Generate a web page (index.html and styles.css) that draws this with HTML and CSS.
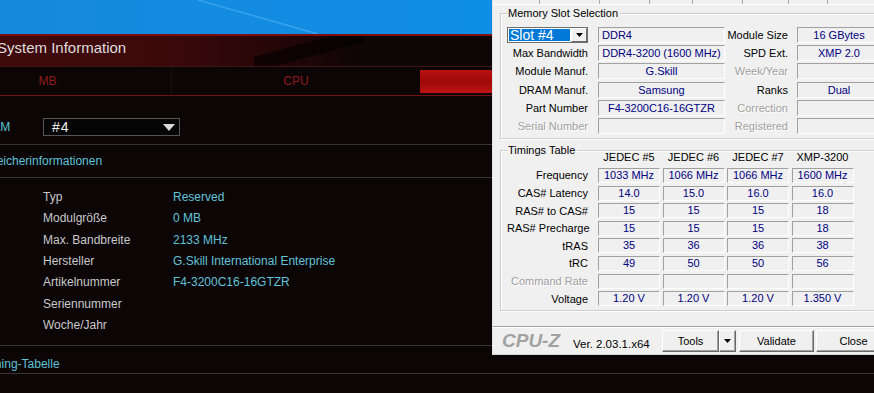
FILE: index.html
```html
<!DOCTYPE html>
<html lang="de">
<head>
  <meta charset="UTF-8">
  <meta name="viewport" content="width=device-width, initial-scale=1.0">
  <title>System Information / CPU-Z</title>
  <link rel="stylesheet" href="styles.css">
</head>
<body>
  <div class="desktop">
    <svg class="wallpaper" width="874" height="40" viewBox="0 0 874 40">
      <line x1="198" y1="0" x2="318" y2="34" stroke="#3aa2ec" stroke-width="1.5"/>
    </svg>

    <!-- window behind: System Information -->
    <div class="app">
      <div class="app-title">System Information</div>
      <div class="app-tabs">
        <div class="app-tab">MB</div>
        <div class="app-tab">CPU</div>
        <div class="app-tab active"></div>
      </div>
      <div class="dram-row">
        <span class="dram-label">DRAM</span>
        <div class="dark-select">#4<span class="tri"></span></div>
      </div>
      <div class="section-head">Speicherinformationen</div>
      <div class="info">
        <div class="info-row"><span class="key">Typ</span><span class="val">Reserved</span></div>
        <div class="info-row"><span class="key">Modulgröße</span><span class="val">0 MB</span></div>
        <div class="info-row"><span class="key">Max. Bandbreite</span><span class="val">2133 MHz</span></div>
        <div class="info-row"><span class="key">Hersteller</span><span class="val">G.Skill International Enterprise</span></div>
        <div class="info-row"><span class="key">Artikelnummer</span><span class="val">F4-3200C16-16GTZR</span></div>
        <div class="info-row"><span class="key">Seriennummer</span><span class="val"></span></div>
        <div class="info-row"><span class="key">Woche/Jahr</span><span class="val"></span></div>
      </div>
      <div class="section-head timing">Timing-Tabelle</div>
    </div>

    <!-- window in front: CPU-Z, SPD tab -->
    <div class="cpuz">
      <div class="cpuz-tabs">
        <span class="ztab t1"></span><span class="ztab t2"></span><span class="ztab t3"></span><span class="ztab t4"></span>
        <span class="ztab t5"></span><span class="ztab t6"></span><span class="ztab t7"></span>
      </div>
      <div class="cpuz-page">
        <div class="group">
          <div class="group-title">Memory Slot Selection</div>
          <div class="slot-grid">
            <div class="slot-select">
              <span class="slot-value">Slot #4</span>
              <span class="slot-btn"><svg width="7" height="4" viewBox="0 0 7 4"><path d="M0 0h7L3.5 4z" fill="#000"/></svg></span>
            </div>
            <div class="box left">DDR4</div>
            <div class="lbl r">Module Size</div>
            <div class="box">16 GBytes</div>

            <div class="lbl">Max Bandwidth</div>
            <div class="box">DDR4-3200 (1600 MHz)</div>
            <div class="lbl r">SPD Ext.</div>
            <div class="box">XMP 2.0</div>

            <div class="lbl">Module Manuf.</div>
            <div class="box">G.Skill</div>
            <div class="lbl r off">Week/Year</div>
            <div class="box"></div>

            <div class="lbl">DRAM Manuf.</div>
            <div class="box">Samsung</div>
            <div class="lbl r">Ranks</div>
            <div class="box">Dual</div>

            <div class="lbl">Part Number</div>
            <div class="box">F4-3200C16-16GTZR</div>
            <div class="lbl r off">Correction</div>
            <div class="box"></div>

            <div class="lbl off">Serial Number</div>
            <div class="box"></div>
            <div class="lbl r off">Registered</div>
            <div class="box"></div>
          </div>
        </div>

        <div class="group">
          <div class="group-title">Timings Table</div>
          <div class="timings">
            <div></div>
            <div class="th">JEDEC #5</div>
            <div class="th">JEDEC #6</div>
            <div class="th">JEDEC #7</div>
            <div class="th">XMP-3200</div>

            <div class="lbl">Frequency</div>
            <div class="box">1033 MHz</div><div class="box">1066 MHz</div><div class="box">1066 MHz</div><div class="box">1600 MHz</div>

            <div class="lbl">CAS# Latency</div>
            <div class="box">14.0</div><div class="box">15.0</div><div class="box">16.0</div><div class="box">16.0</div>

            <div class="lbl">RAS# to CAS#</div>
            <div class="box">15</div><div class="box">15</div><div class="box">15</div><div class="box">18</div>

            <div class="lbl">RAS# Precharge</div>
            <div class="box">15</div><div class="box">15</div><div class="box">15</div><div class="box">18</div>

            <div class="lbl">tRAS</div>
            <div class="box">35</div><div class="box">36</div><div class="box">36</div><div class="box">38</div>

            <div class="lbl">tRC</div>
            <div class="box">49</div><div class="box">50</div><div class="box">50</div><div class="box">56</div>

            <div class="lbl off">Command Rate</div>
            <div class="box"></div><div class="box"></div><div class="box"></div><div class="box"></div>

            <div class="lbl">Voltage</div>
            <div class="box">1.20 V</div><div class="box">1.20 V</div><div class="box">1.20 V</div><div class="box">1.350 V</div>
          </div>
        </div>
      </div>

      <div class="cpuz-foot">
        <span class="logo">CPU-Z</span>
        <span class="ver">Ver. 2.03.1.x64</span>
        <button class="btn tools">Tools</button>
        <button class="btn drop"><svg width="7" height="4" viewBox="0 0 7 4"><path d="M0 0h7L3.5 4z" fill="#000"/></svg></button>
        <button class="btn validate">Validate</button>
        <button class="btn close">Close</button>
      </div>
    </div>
  </div>
</body>
</html>
```

FILE: styles.css
```css
* {
  box-sizing: border-box;
}
body {
  margin: 0;
  font-family: "Liberation Sans", Arial, sans-serif;
}
.desktop {
  position: relative;
  width: 874px;
  height: 393px;
  overflow: hidden;
  background: linear-gradient(90deg, #1689dd, #0a93ec);
}
.wallpaper {
  position: absolute;
  left: 0;
  top: 0;
}

/* System Information window */
.app {
  position: absolute;
  left: -76px;
  top: 34px;
  width: 1000px;
  height: 380px;
  background: #0b0506;
}
.app-title {
  height: 32px;
  border-top: 2px solid #7e0d0d;
  padding-left: 73px;
  line-height: 24px;
  font-size: 15px;
  color: #dedede;
  background:
    linear-gradient(165deg, transparent 0 35%, rgba(0, 0, 0, 0.6) 35% 60%, transparent 60%) 330px 0 / 110px 100% no-repeat,
    linear-gradient(90deg, #420a0c 0, #3c090b 240px, #260607 350px, #0d0506 440px);
}
.app-tabs {
  display: flex;
  height: 30px;
  border-top: 1px solid #3e1515;
  border-bottom: 1px solid #6e1212;
}
.app-tab {
  width: 248px;
  line-height: 28px;
  text-align: center;
  font-size: 12px;
  color: #8f1b1b;
}
.app-tab:first-child {
  border-right: 1px solid #1e0d0d;
}
.app-tab.active {
  height: 23px;
  margin: 3px 0 2px;
  background: linear-gradient(#b80f0f, #9e0a0a 55%, #c21111);
}
.dram-row {
  display: flex;
  align-items: center;
  padding: 22px 0 8px 51px;
  border-bottom: 1px solid #363636;
}
.dram-label {
  width: 68px;
  font-size: 12px;
  color: #5fc2d6;
}
.dark-select {
  display: flex;
  align-items: center;
  justify-content: space-between;
  width: 137px;
  height: 18px;
  padding: 0 4px 0 8px;
  border: 1px solid #555;
  background: #050505;
  color: #f2f2f2;
  font-size: 14px;
  letter-spacing: 1px;
}
.tri {
  border-left: 6px solid transparent;
  border-right: 6px solid transparent;
  border-top: 7px solid #d8d8d8;
}
.section-head {
  height: 33px;
  line-height: 32px;
  padding-left: 58px;
  font-size: 12px;
  color: #5fc2d6;
  border-bottom: 1px solid #363636;
}
.section-head.timing {
  height: 28px;
  padding-top: 10px;
  line-height: 17px;
}
.info {
  padding: 9px 0 9px;
  border-bottom: 1px solid #363636;
}
.info-row {
  display: flex;
  padding-left: 119px;
  line-height: 21.33px;
  font-size: 12px;
}
.key {
  width: 130px;
  color: #c9c9c9;
}
.val {
  color: #62c3d7;
}

/* CPU-Z window */
.cpuz {
  position: absolute;
  left: 492px;
  top: 0;
  width: 408px;
  background: #f0f0f0;
  border-left: 1px solid #e2e2e2;
  border-bottom: 1px solid #d4d4d4;
  font-size: 11px;
  color: #000;
}
.cpuz-tabs {
  display: flex;
  height: 5px;
  border-bottom: 1px solid #fff;
}
.ztab {
  border-right: 1px solid #a8a8a8;
}
.t1 { width: 47px; }
.t2 { width: 60px; }
.t3 { width: 50px; }
.t4 { width: 43px; }
.t5 { width: 50px; }
.t6 { width: 46px; }
.t7 { width: 39px; }
.cpuz-page {
  padding: 8px 0 15px 7px;
}
.group {
  border: 1px solid #cdcdcd;
  box-shadow: inset 1px 1px 0 #fff, 1px 1px 0 #fff;
  padding: 0 0 4px 6px;
}
.group + .group {
  margin-top: 11px;
}
.group-title {
  width: fit-content;
  margin: -8px 0 0 1px;
  padding-right: 2px;
  line-height: 14px;
  background: #f0f0f0;
}
.slot-grid {
  display: grid;
  grid-template-columns: 91px 127px 72px 84px;
  grid-auto-rows: 16px;
  row-gap: 2.2px;
  margin-top: 7px;
  align-items: center;
}
.lbl {
  text-align: right;
  padding-right: 10px;
  white-space: nowrap;
}
.lbl.r {
  padding-right: 9px;
}
.lbl.off {
  color: #a0a0a0;
  text-shadow: 1px 1px 0 #fff;
}
.box {
  height: 100%;
  border: 1px solid;
  border-color: #a0a0a0 #fff #fff #a0a0a0;
  color: #000080;
  text-align: center;
  line-height: 14px;
  white-space: nowrap;
  overflow: hidden;
}
.box.left {
  text-align: left;
  padding-left: 3px;
}
.slot-select {
  display: flex;
  width: 81px;
  height: 16px;
  border: 1px solid #6e6e6e;
  background: #fff;
}
.slot-value {
  flex: 1;
  margin: 1px;
  padding-left: 1px;
  background: #0078d7;
  color: #fff;
  font-size: 14px;
  line-height: 12px;
}
.slot-btn {
  display: flex;
  align-items: center;
  justify-content: center;
  width: 16px;
  border: 1px solid;
  border-color: #fff #696969 #696969 #fff;
  background: #f0f0f0;
}
.timings {
  display: grid;
  grid-template-columns: 88.5px repeat(4, 62px);
  column-gap: 2.5px;
  grid-auto-rows: 15px;
  row-gap: 2.6px;
  margin-top: -6.6px;
  align-items: center;
}
.timings .lbl {
  padding-right: 7.5px;
}
.timings .box {
  line-height: 13px;
}
.th {
  text-align: center;
  line-height: 15px;
}
.cpuz-foot {
  display: flex;
  align-items: center;
  height: 28px;
  padding: 3px 0 2px 9px;
  border-top: 1px solid #a0a0a0;
  box-shadow: inset 0 1px 0 #fff;
}
.logo {
  width: 71px;
  font: italic bold 19px/22px "Liberation Sans", Arial, sans-serif;
  color: #a2a2a2;
}
.ver {
  width: 89px;
  padding-top: 5px;
  font-size: 11.5px;
}
.btn {
  display: flex;
  align-items: center;
  justify-content: center;
  width: 75px;
  height: 22px;
  padding: 0;
  border: 1px solid;
  border-color: #fff #696969 #696969 #fff;
  box-shadow: inset -1px -1px 0 #a0a0a0;
  background: #f0f0f0;
  font: 11px "Liberation Sans", Arial, sans-serif;
  color: #000;
}
.btn.tools {
  width: 57px;
}
.btn.drop {
  width: 17px;
}
.btn.validate {
  margin-left: 3px;
}
.btn.close {
  margin-left: 2px;
}
```
